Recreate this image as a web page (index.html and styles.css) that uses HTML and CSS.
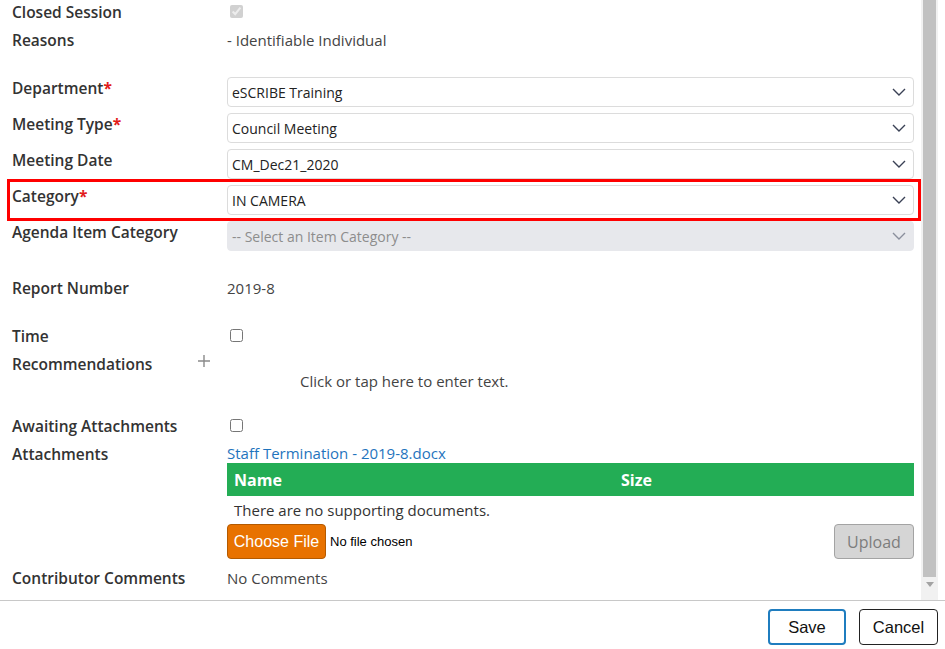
FILE: index.html
```html
<!DOCTYPE html>
<html lang="en">
<head>
<meta charset="utf-8">
<title>Edit Agenda Item</title>
<link rel="stylesheet" href="styles.css">
</head>
<body>
<div class="dialog">
  <div class="pane">
    <div class="form">
      <div class="row row-line">
        <div class="label">Closed Session</div>
        <div class="value"><input class="check" type="checkbox" checked disabled></div>
      </div>
      <div class="row row-line gap4">
        <div class="label">Reasons</div>
        <div class="value text">- Identifiable Individual</div>
      </div>

      <div class="row row-field first-field">
        <div class="label">Department<span class="req">*</span></div>
        <div class="value">
          <div class="select"><span>eSCRIBE Training</span><svg class="chev" viewBox="0 0 14 8"><path d="M1 1l6 6 6-6"/></svg></div>
        </div>
      </div>
      <div class="row row-field">
        <div class="label">Meeting Type<span class="req">*</span></div>
        <div class="value">
          <div class="select"><span>Council Meeting</span><svg class="chev" viewBox="0 0 14 8"><path d="M1 1l6 6 6-6"/></svg></div>
        </div>
      </div>
      <div class="row row-field">
        <div class="label">Meeting Date</div>
        <div class="value">
          <div class="select"><span>CM_Dec21_2020</span><svg class="chev" viewBox="0 0 14 8"><path d="M1 1l6 6 6-6"/></svg></div>
        </div>
      </div>
      <div class="row row-field highlighted">
        <div class="label">Category<span class="req">*</span></div>
        <div class="value">
          <div class="select"><span>IN CAMERA</span><svg class="chev" viewBox="0 0 14 8"><path d="M1 1l6 6 6-6"/></svg></div>
        </div>
      </div>
      <div class="row row-field">
        <div class="label">Agenda Item Category</div>
        <div class="value">
          <div class="select disabled"><span>-- Select an Item Category --</span><svg class="chev" viewBox="0 0 14 8"><path d="M1 1l6 6 6-6"/></svg></div>
        </div>
      </div>

      <div class="row row-line report">
        <div class="label">Report Number</div>
        <div class="value text">2019-8</div>
      </div>

      <div class="row row-line time">
        <div class="label">Time</div>
        <div class="value"><input class="check" type="checkbox"></div>
      </div>
      <div class="row gap4">
        <div class="label label-add">
          <span>Recommendations</span>
          <svg class="plus" viewBox="0 0 12 12"><path d="M6 0v12M0 6h12"/></svg>
        </div>
        <div class="value">
          <div class="placeholder">Click or tap here to enter text.</div>
        </div>
      </div>

      <div class="row row-line awaiting">
        <div class="label">Awaiting Attachments</div>
        <div class="value"><input class="check" type="checkbox"></div>
      </div>
      <div class="row gap4">
        <div class="label">Attachments</div>
        <div class="value">
          <a class="doc-link" href="#">Staff Termination - 2019-8.docx</a>
          <div class="docs-head">
            <div>Name</div>
            <div>Size</div>
          </div>
          <div class="docs-empty">There are no supporting documents.</div>
          <div class="upload-row">
            <div class="file-pick">
              <button class="choose" type="button">Choose File</button>
              <span class="file-none">No file chosen</span>
            </div>
            <button class="upload" type="button" disabled>Upload</button>
          </div>
        </div>
      </div>

      <div class="row row-line comments">
        <div class="label">Contributor Comments</div>
        <div class="value text">No Comments</div>
      </div>
    </div>

    <div class="scrollbar">
      <div class="thumb"></div>
      <svg class="arrow" viewBox="0 0 8 5"><path d="M0 0h8L4 5z"/></svg>
    </div>
  </div>

  <div class="footer">
    <button class="btn btn-save" type="button">Save</button>
    <button class="btn btn-cancel" type="button">Cancel</button>
  </div>
</div>
</body>
</html>
```

FILE: styles.css
```css
* {
  box-sizing: border-box;
}

html, body {
  margin: 0;
  padding: 0;
  background: #fff;
}

body {
  font-family: "Open Sans", "Liberation Sans", sans-serif;
  font-size: 16px;
  color: #333;
  width: 945px;
  height: 649px;
  overflow: hidden;
}

.dialog {
  display: flex;
  flex-direction: column;
  height: 649px;
}

/* scrolling body of the dialog */
.pane {
  display: flex;
  height: 600px;
  width: 938px;
}

.form {
  flex: 1;
  padding: 0 7px 0 12px;
  overflow: hidden;
}

.row {
  display: grid;
  grid-template-columns: 215px 1fr;
  position: relative;
}

.row-line {
  height: 24px;
  line-height: 24px;
}

.gap4 {
  margin-top: 4px;
}

.label {
  font-weight: 600;
  font-size: 15.5px;
  line-height: 24px;
  color: #333;
  white-space: nowrap;
}

.req {
  color: #e21b1b;
  font-weight: 700;
}

.value.text {
  font-size: 15px;
  color: #444;
  line-height: 24px;
}

.check {
  margin: 5px 0 0 3px;
  width: 13px;
  height: 13px;
  display: block;
}

/* dropdown rows */
.row-field {
  height: 36px;
}

.first-field {
  margin-top: 24px;
}

.select {
  margin-top: 1px;
  height: 30px;
  border: 1px solid #dcdcdc;
  border-radius: 4px;
  background: #fff;
  display: flex;
  align-items: center;
  justify-content: space-between;
  padding: 0 7px 0 4px;
  font-size: 14px;
  color: #222;
}

.select.disabled {
  background: #e7e8ec;
  border-color: #e7e8ec;
  color: #8d8d8d;
}

.chev {
  width: 14px;
  height: 8px;
  fill: none;
  stroke: #3a4155;
  stroke-width: 1.4;
}

.select.disabled .chev {
  stroke: #8a8f9c;
}

.highlighted::after {
  content: "";
  position: absolute;
  left: -5px;
  right: -7px;
  top: -5px;
  bottom: -1px;
  border: 3px solid #f00;
  pointer-events: none;
}

.report {
  margin-top: 20px;
}

.time {
  margin-top: 24px;
}

.label-add {
  display: flex;
  justify-content: space-between;
  align-items: flex-start;
  padding-right: 17px;
}

.plus {
  width: 12px;
  height: 12px;
  margin-top: 3px;
  stroke: #8a8a8a;
  stroke-width: 1.4;
}

.placeholder {
  padding: 17px 0 0 73px;
  font-size: 15px;
  line-height: 24px;
  color: #444;
}

.awaiting {
  margin-top: 21px;
}

.doc-link {
  display: block;
  height: 21px;
  line-height: 22px;
  font-size: 15px;
  color: #1f74bd;
  text-decoration: none;
}

.docs-head {
  display: grid;
  grid-template-columns: 387px 1fr;
  height: 33px;
  align-items: center;
  background: #23ad55;
  color: #fff;
  font-weight: 700;
  font-size: 16px;
}

.docs-head div {
  padding-left: 7px;
}

.docs-empty {
  height: 28px;
  line-height: 28px;
  padding-left: 7px;
  font-size: 15px;
  color: #333;
}

.upload-row {
  display: flex;
  justify-content: space-between;
  align-items: center;
  height: 35px;
}

.file-pick {
  display: flex;
  align-items: center;
  gap: 4px;
}

.choose {
  height: 35px;
  width: 99px;
  padding: 0;
  border: 1px solid #b45a00;
  border-radius: 4px;
  background: #e87200;
  color: #fff;
  font-family: "Liberation Sans", Arial, sans-serif;
  font-size: 16px;
}

.file-none {
  font-family: "Liberation Sans", Arial, sans-serif;
  font-size: 13px;
  color: #000;
}

.upload {
  height: 35px;
  width: 80px;
  padding: 0;
  border: 1px solid #a3a3a3;
  border-radius: 4px;
  background: #d5d5d5;
  color: #7d7d7d;
  font-family: "Open Sans", sans-serif;
  font-size: 16px;
}

.comments {
  margin-top: 7px;
}

/* classic scrollbar */
.scrollbar {
  width: 17px;
  background: #f1f1f1;
  display: flex;
  flex-direction: column;
  align-items: center;
  padding: 0 2px;
}

.thumb {
  width: 13px;
  height: 577px;
  background: #c1c1c1;
}

.arrow {
  width: 8px;
  height: 5px;
  margin-top: 5px;
  fill: #a3a3a3;
}

/* dialog buttons */
.footer {
  border-top: 1px solid #c8c8c8;
  display: flex;
  justify-content: flex-end;
  gap: 13px;
  padding: 8px 7px 0 0;
}

.btn {
  height: 36px;
  border-radius: 4px;
  background: #fff;
  font-family: "Liberation Sans", Arial, sans-serif;
  font-size: 16.5px;
  color: #111;
  padding: 0;
}

.btn-save {
  width: 78px;
  border: 2px solid #1f7dbf;
}

.btn-cancel {
  width: 79px;
  border: 1px solid #222;
}
```
